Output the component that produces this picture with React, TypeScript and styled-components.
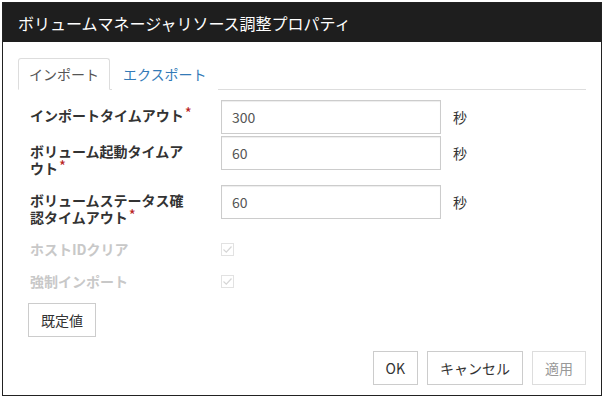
import styled, { createGlobalStyle } from "styled-components";

const GlobalStyle = createGlobalStyle`
  html, body {
    margin: 0;
    padding: 0;
    background: #fff;
  }
  body {
    font-family: "Noto Sans CJK JP", "Noto Sans", sans-serif;
    font-size: 14px;
    color: #333;
  }
  * {
    box-sizing: border-box;
  }
`;

const Dialog = styled.div`
  margin: 2px 0 0 2px;
  width: 600px;
  height: 394px;
  border: 1px solid #222;
  display: flex;
  flex-direction: column;
  background: #fff;
`;

const Header = styled.div`
  height: 39px;
  background: #1e1e1e;
  color: #fff;
  font-size: 16px;
  display: flex;
  align-items: center;
  padding: 0 15px;
`;

const Body = styled.div`
  flex: 1;
  display: flex;
  flex-direction: column;
  padding: 16px 15px 10px 15px;
`;

const TabBar = styled.div`
  display: flex;
  height: 32px;
  border-bottom: 1px solid #ddd;
`;

const Tab = styled.div<{ $active?: boolean }>`
  display: flex;
  align-items: center;
  padding: 0 10px;
  margin-right: 2px;
  margin-bottom: -1px;
  border: 1px solid ${(p) => (p.$active ? "#ddd" : "transparent")};
  border-bottom-color: ${(p) => (p.$active ? "#fff" : "transparent")};
  border-radius: 3px 3px 0 0;
  background: #fff;
  color: ${(p) => (p.$active ? "#555" : "#337ab7")};
  line-height: 20px;
`;

const Form = styled.div`
  display: flex;
  flex-direction: column;
  padding: 10px 0 0 12px;
`;

const Row = styled.div`
  display: flex;
  align-items: flex-start;
  margin-bottom: 2px;
`;

const CheckRow = styled.div`
  display: flex;
  align-items: center;
  height: 30px;
  margin-bottom: 2px;
`;

const Label = styled.div<{ $disabled?: boolean }>`
  width: 191px;
  padding: 7px 26px 6px 0;
  font-weight: bold;
  line-height: 17px;
  color: ${(p) => (p.$disabled ? "#c8c8c8" : "#333")};
`;

const CheckLabel = styled(Label)`
  padding-top: 0;
  padding-bottom: 0;
`;

const Required = styled.span`
  display: inline-block;
  color: #b8221c;
  font-size: 15px;
  font-weight: normal;
  line-height: 11px;
  vertical-align: top;
  margin-left: 1px;
`;

const Input = styled.div`
  width: 220px;
  height: 34px;
  border: 1px solid #ccc;
  box-shadow: inset 0 1px 1px rgba(0, 0, 0, 0.075);
  padding: 0 10px;
  display: flex;
  align-items: center;
  color: #555;
  font-size: 14px;
`;

const Unit = styled.div`
  height: 34px;
  display: flex;
  align-items: center;
  margin-left: 12px;
  color: #333;
`;

const Check = styled.span`
  width: 13px;
  height: 13px;
  border: 1px solid #e2e2e2;
  display: flex;
  align-items: center;
  justify-content: center;
  background: #fff;
`;

const Button = styled.button<{ $disabled?: boolean }>`
  height: 34px;
  padding: 0 12px;
  background: #fff;
  border: 1px solid ${(p) => (p.$disabled ? "#ddd" : "#ccc")};
  color: ${(p) => (p.$disabled ? "#999" : "#333")};
  font-family: inherit;
  font-size: 14px;
  cursor: pointer;
`;

const DefaultBar = styled.div`
  display: flex;
  padding: 5px 0 0 10px;
`;

const Footer = styled.div`
  margin-top: auto;
  display: flex;
  justify-content: flex-end;
  gap: 9px;
`;

function CheckBox() {
  return (
    <Check>
      <svg width="11" height="11" viewBox="0 0 11 11">
        <path d="M1.5 5.5 L4.3 8.2 L9.5 2.5" fill="none" stroke="#d6d6d6" strokeWidth="1.2" />
      </svg>
    </Check>
  );
}

const fields = [
  { label: "インポートタイムアウト", value: "300" },
  { label: "ボリューム起動タイムアウト", value: "60" },
  { label: "ボリュームステータス確認タイムアウト", value: "60" },
];

export default function App() {
  return (
    <>
      <GlobalStyle />
      <Dialog>
        <Header>ボリュームマネージャリソース調整プロパティ</Header>
        <Body>
          <TabBar>
            <Tab $active>インポート</Tab>
            <Tab>エクスポート</Tab>
          </TabBar>
          <Form>
            {fields.map((f) => (
              <Row key={f.label}>
                <Label>
                  {f.label}
                  <Required>*</Required>
                </Label>
                <Input>{f.value}</Input>
                <Unit>秒</Unit>
              </Row>
            ))}
            <CheckRow>
              <CheckLabel $disabled>ホストIDクリア</CheckLabel>
              <CheckBox />
            </CheckRow>
            <CheckRow>
              <CheckLabel $disabled>強制インポート</CheckLabel>
              <CheckBox />
            </CheckRow>
          </Form>
          <DefaultBar>
            <Button>既定値</Button>
          </DefaultBar>
          <Footer>
            <Button>OK</Button>
            <Button>キャンセル</Button>
            <Button $disabled>適用</Button>
          </Footer>
        </Body>
      </Dialog>
    </>
  );
}
